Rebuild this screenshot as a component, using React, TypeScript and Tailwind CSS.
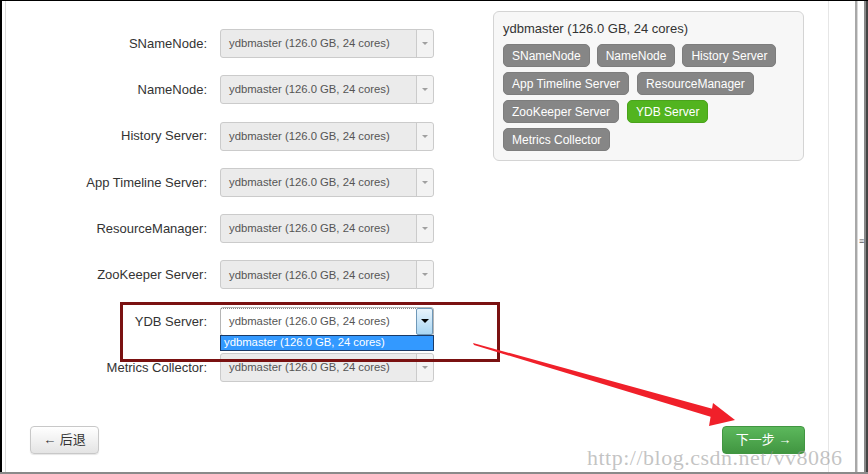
import React from "react";

const rows = [
  "SNameNode",
  "NameNode",
  "History Server",
  "App Timeline Server",
  "ResourceManager",
  "ZooKeeper Server",
  "YDB Server",
  "Metrics Collector",
];

const host = "ydbmaster (126.0 GB, 24 cores)";

function Select({ active }: { active?: boolean }) {
  return (
    <div className="relative w-[214px] h-[29px]">
      <div
        className={`flex h-full items-stretch rounded-[3px] border ${
          active ? "bg-white border-[#b5b5b5]" : "bg-[#ebebeb] border-[#cbcbcb]"
        }`}
      >
        <div
          className={`flex-1 flex items-center pl-[8px] text-[11.3px] text-[#555] ${
            active ? "border-t border-dotted border-[#888]" : ""
          }`}
        >
          {host}
        </div>
        {active ? (
          <div className="w-[17px] flex items-center justify-center rounded-[2px] border border-[#6f98b8] bg-gradient-to-b from-[#e8f4fc] to-[#a9d6f3]">
            <div className="w-0 h-0 border-l-[4px] border-r-[4px] border-t-[4px] border-l-transparent border-r-transparent border-t-black" />
          </div>
        ) : (
          <div className="w-[17px] flex items-center justify-center border-l border-[#cbcbcb] bg-[#f3f3f3] rounded-r-[3px]">
            <div className="w-0 h-0 border-l-[3px] border-r-[3px] border-t-[3px] border-l-transparent border-r-transparent border-t-[#a0a0a0]" />
          </div>
        )}
      </div>
      {active && (
        <div className="absolute left-0 top-[28px] w-[214px] h-[16px] bg-[#3399ff] border border-[#1a3a66] flex items-center pl-[3px] text-[11.3px] text-white leading-none">
          {host}
        </div>
      )}
    </div>
  );
}

function Badge({ label, green }: { label: string; green?: boolean }) {
  return (
    <div
      className={`h-[23px] px-[8px] flex items-center rounded-[5px] text-[12px] text-white border ${
        green ? "bg-[#52b41f] border-[#4aa31b]" : "bg-[#868686] border-[#7d7d7d]"
      }`}
    >
      {label}
    </div>
  );
}

export default function App() {
  return (
    <div
      className="relative w-[868px] h-[474px] bg-white overflow-hidden flex border-t border-black border-b-2 border-b-[#8a8a8a]"
      style={{ fontFamily: '"Liberation Sans", Arial, "Noto Sans CJK SC", sans-serif' }}
    >
      <div className="w-[2px] bg-black" />
      <div className="w-[3px]" />
      <div className="w-px bg-[#dcdcdc]" />

      <div className="w-[822px] flex flex-col">
        <div className="flex items-start pt-[10px]">
          <div className="mt-[18px] flex flex-col gap-[17.3px] w-[428px]">
            {rows.map((r) => (
              <div key={r} className="flex items-center h-[29px]">
                <div className="w-[201px] text-right text-[13px] text-[#333]">{r}:</div>
                <div className="ml-[13px]">
                  <Select active={r === "YDB Server"} />
                </div>
              </div>
            ))}
          </div>

          <div className="ml-[59px] w-[311px] h-[150px] rounded-[6px] border border-[#d4d4d4] bg-[#f7f7f7] px-[9px] pt-[8px]">
            <div className="text-[13px] text-[#333] leading-[18px]">{host}</div>
            <div className="mt-[6px] flex flex-col gap-[5px]">
              <div className="flex gap-[7px]">
                <Badge label="SNameNode" />
                <Badge label="NameNode" />
                <Badge label="History Server" />
              </div>
              <div className="flex gap-[8px]">
                <Badge label="App Timeline Server" />
                <Badge label="ResourceManager" />
              </div>
              <div className="flex gap-[8px]">
                <Badge label="ZooKeeper Server" />
                <Badge label="YDB Server" green />
              </div>
              <div className="flex gap-[8px]">
                <Badge label="Metrics Collector" />
              </div>
            </div>
          </div>
        </div>

        <div className="mt-[44px] flex justify-between pl-[24px] pr-[23px]">
          <button className="h-[28px] w-[69px] rounded-[4px] border border-[#c8c8c8] bg-gradient-to-b from-white to-[#e4e4e4] text-[13px] text-[#333] shadow-[0_1px_1px_rgba(0,0,0,0.1)]">
            ← 后退
          </button>
          <button className="h-[28px] w-[83px] rounded-[4px] border border-[#419641] bg-gradient-to-b from-[#5cb85c] to-[#419641] text-[13px] text-white">
            下一步 →
          </button>
        </div>
      </div>

      <div className="w-px bg-[#e6e6e6]" />
      <div className="w-[26px]" />
      <div className="w-[13px] flex">
        <div className="w-[2px] bg-[#a8a8a8]" />
        <div className="w-[1px] bg-[#d8d8d8]" />
        <div className="relative w-[6px] bg-white">
          <div className="absolute top-[236px] left-[1px] text-[9px] leading-none text-[#555]">≡</div>
        </div>
        <div className="w-[2px] bg-[#888]" />
        <div className="w-[2px] bg-[#444]" />
      </div>

      <div className="absolute left-[120px] top-[301px] w-[380px] h-[60px] border-[3px] border-[#7a1111]" />

      <svg className="absolute left-0 top-0" width="868" height="474" viewBox="0 0 868 474">
        <polygon points="473,342 474,344 713,416.5 715,408.5" fill="#f0202a" />
        <polygon points="713,402 735,419 709,425" fill="#f0202a" />
      </svg>

      <div
        className="absolute left-[587px] top-[446px] text-[22px] text-[#9c9c9c]/60 tracking-[0.5px] leading-none"
        style={{ fontFamily: '"Liberation Serif", "Times New Roman", serif' }}
      >
        http://blog.csdn.net/vv8086
      </div>
    </div>
  );
}
